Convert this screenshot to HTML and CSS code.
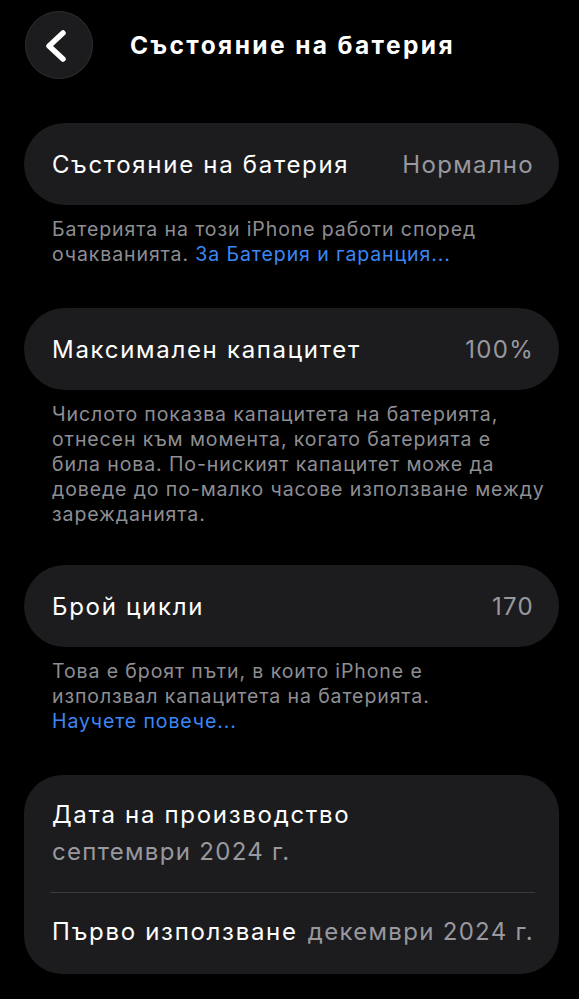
FILE: index.html
```html
<!DOCTYPE html>
<html lang="bg">
<head>
<meta charset="utf-8">
<title>Състояние на батерия</title>
<link rel="stylesheet" href="styles.css">
</head>
<body>
<header class="topbar">
  <div class="back">
    <svg width="66" height="66" viewBox="0 0 66 66"><polyline points="37,21 23,34 37,47" fill="none" stroke="#fff" stroke-width="5.5" stroke-linecap="round" stroke-linejoin="round"/></svg>
  </div>
  <h1 class="title">Състояние на батерия</h1>
</header>
<main class="content">
  <section class="group g1">
    <div class="card row">
      <span class="label">Състояние на батерия</span>
      <span class="value">Нормално</span>
    </div>
    <p class="footer">Батерията на този iPhone работи според<br>очакванията. <a class="link">За Батерия и гаранция...</a></p>
  </section>
  <section class="group g2">
    <div class="card row">
      <span class="label">Максимален капацитет</span>
      <span class="value">100%</span>
    </div>
    <p class="footer">Числото показва капацитета на батерията,<br>отнесен към момента, когато батерията е<br>била нова. По-ниският капацитет може да<br>доведе до по-малко часове използване между<br>зарежданията.</p>
  </section>
  <section class="group g3">
    <div class="card row">
      <span class="label">Брой цикли</span>
      <span class="value">170</span>
    </div>
    <p class="footer">Това е броят пъти, в които iPhone е<br>използвал капацитета на батерията.<br><a class="link">Научете повече...</a></p>
  </section>
  <section class="group g4">
    <div class="card tall">
      <div class="stack">
        <span class="label">Дата на производство</span>
        <span class="value sub">септември 2024 г.</span>
      </div>
      <div class="divider"></div>
      <div class="row2">
        <span class="label">Първо използване</span>
        <span class="value">декември 2024 г.</span>
      </div>
    </div>
  </section>
</main>
</body>
</html>
```

FILE: styles.css
```css
html, body {
  margin: 0;
  padding: 0;
  background: #000;
}
body {
  font-family: Inter, "Noto Sans", "Liberation Sans", sans-serif;
  color: #fff;
  width: 579px;
  height: 999px;
  overflow: hidden;
}
.topbar {
  display: flex;
  align-items: center;
  padding: 10px 0 0 25px;
  height: 70px;
}
.back {
  width: 66px;
  height: 66px;
  border-radius: 50%;
  background: #1c1c1e;
  border: 1px solid #2e2e30;
  display: flex;
  align-items: center;
  justify-content: center;
  flex-shrink: 0;
}
.back svg {
  display: block;
}
.title {
  margin: 0 0 0 37px;
  font-size: 24.5px;
  font-weight: 700;
  letter-spacing: 2.4px;
  white-space: nowrap;
}
.content {
  padding: 0 20px 0 24px;
}
.g1 { margin-top: 43px; }
.g2 { margin-top: 41px; }
.g3 { margin-top: 38px; }
.g4 { margin-top: 41px; }
.card {
  background: #1c1c1e;
  border-radius: 41px;
}
.row {
  height: 82px;
  display: flex;
  align-items: center;
  justify-content: space-between;
  padding: 0 25px 0 28px;
}
.label {
  font-size: 24px;
  letter-spacing: 1.7px;
  color: #fff;
  white-space: nowrap;
}
.value {
  font-size: 24px;
  letter-spacing: 1.3px;
  color: #98989e;
  white-space: nowrap;
}
.footer {
  margin: 12px 0 0;
  padding: 0 0 0 28px;
  font-size: 19.5px;
  line-height: 25px;
  letter-spacing: 0.9px;
  color: #8e8e93;
  white-space: nowrap;
}
.link {
  color: #3b87f6;
  text-decoration: none;
}
.tall {
  border-radius: 38px;
  padding: 0 24px 0 26px;
}
.stack {
  display: flex;
  flex-direction: column;
  padding: 25px 0 25px 2px;
  line-height: 30px;
}
.sub {
  margin-top: 7px;
}
.divider {
  height: 1px;
  background: #3a3a3c;
}
.row2 {
  display: flex;
  justify-content: space-between;
  align-items: center;
  padding: 24px 1px 27px 2px;
  line-height: 30px;
}
```
